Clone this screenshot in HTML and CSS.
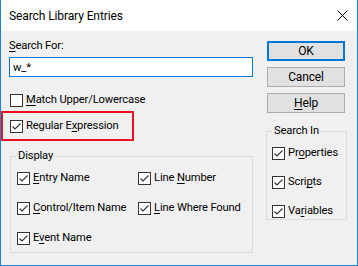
FILE: index.html
```html
<!DOCTYPE html>
<html lang="en">
<head>
    <meta charset="UTF-8">
    <title>Search Library Entries</title>
    <link rel="stylesheet" href="styles.css">
</head>
<body>
    <div class="window">
        <div class="titlebar">
            <span class="title">Search Library Entries</span>
            <svg class="close" width="11" height="11" viewBox="0 0 11 11">
                <path d="M0.5 0.5 L10.5 10.5 M10.5 0.5 L0.5 10.5" stroke="#000" stroke-width="1" fill="none"/>
            </svg>
        </div>
        <div class="content">
            <div class="left">
                <div class="label"><u>S</u>earch For:</div>
                <input type="text" class="search" value="w_*">

                <label class="check first">
                    <span class="box"></span>
                    <span><u>M</u>atch Upper/Lowercase</span>
                </label>

                <div class="highlight">
                    <label class="check">
                        <span class="box checked"></span>
                        <span>Regular E<u>x</u>pression</span>
                    </label>
                </div>

                <fieldset class="group display">
                    <legend>Display</legend>
                    <div class="grid">
                        <label class="check"><span class="box checked"></span><span><u>E</u>ntry Name</span></label>
                        <label class="check"><span class="box checked"></span><span>Line <u>N</u>umber</span></label>
                        <label class="check"><span class="box checked"></span><span><u>C</u>ontrol/Item Name</span></label>
                        <label class="check"><span class="box checked"></span><span><u>L</u>ine Where Found</span></label>
                        <label class="check"><span class="box checked"></span><span>E<u>v</u>ent Name</span></label>
                    </div>
                </fieldset>
            </div>

            <div class="right">
                <button class="btn default">OK</button>
                <button class="btn">Cancel</button>
                <button class="btn"><u>H</u>elp</button>

                <fieldset class="group searchin">
                    <legend>Search In</legend>
                    <div class="stack">
                        <label class="check"><span class="box checked"></span><span>Pr<u>o</u>perties</span></label>
                        <label class="check"><span class="box checked"></span><span>Scri<u>p</u>ts</span></label>
                        <label class="check"><span class="box checked"></span><span>Va<u>r</u>iables</span></label>
                    </div>
                </fieldset>
            </div>
        </div>
    </div>
</body>
</html>
```

FILE: styles.css
```css
body {
    margin: 0;
    font-family: Roboto, "Noto Sans", sans-serif;
    font-size: 11.2px;
    letter-spacing: -0.15px;
    color: #000;
    background-color: #fff;
}
u {
    text-decoration: underline;
    text-underline-offset: 2px;
}
.window {
    width: 356px;
    height: 265px;
    border: 1px solid #1883d7;
    border-top: none;
    background-color: #f0f0f0;
    display: flex;
    flex-direction: column;
}
.titlebar {
    height: 31px;
    background-color: #fff;
    display: flex;
    align-items: center;
    justify-content: space-between;
    padding: 0 9px 0 8px;
}
.title {
    font-size: 12px;
    letter-spacing: -0.1px;
}
.content {
    display: flex;
    padding-left: 8px;
}
.left {
    width: 244px;
    display: flex;
    flex-direction: column;
}
.label {
    margin-top: 7px;
    line-height: 16px;
}
.search {
    margin-top: 3px;
    width: 244px;
    height: 20px;
    box-sizing: border-box;
    border: 1px solid #0078d7;
    padding: 0 0 0 3px;
    font-family: inherit;
    font-size: inherit;
    letter-spacing: inherit;
    outline: none;
}
.check {
    display: flex;
    align-items: center;
    gap: 3px;
    height: 16px;
    line-height: 16px;
    white-space: nowrap;
}
.check.first {
    margin-top: 15px;
    margin-left: 1px;
}
.box {
    width: 13px;
    height: 13px;
    box-sizing: border-box;
    border: 1px solid #333;
    background-color: #fff;
    flex: none;
}
.box.checked {
    background: #fff url("data:image/svg+xml;utf8,<svg xmlns='http://www.w3.org/2000/svg' width='11' height='11'><path d='M1.5 5.5 L4 8 L9.5 2.5' stroke='%23333' stroke-width='1.1' fill='none'/></svg>") no-repeat center;
}
.highlight {
    margin: 3px 0 0 -8px;
    width: 122px;
    height: 26px;
    border: 2px solid #e81123;
    padding-left: 7px;
    display: flex;
    align-items: center;
}
.group {
    margin: 0;
    border: 1px solid #dcdcdc;
    padding: 0;
    min-width: 0;
}
.group legend {
    padding: 0 2px;
    margin-left: 5px;
    line-height: 16px;
}
.display {
    margin-top: 7px;
    margin-left: 1px;
    width: 243px;
    height: 105px;
    box-sizing: border-box;
}
.grid {
    display: grid;
    grid-template-columns: 121px 1fr;
    row-gap: 14px;
    padding: 6px 0 0 6px;
}
.right {
    margin-left: 13px;
    display: flex;
    flex-direction: column;
    padding-top: 10px;
}
.btn {
    width: 78px;
    height: 20px;
    margin-left: 1px;
    margin-bottom: 6px;
    border: 1px solid #adadad;
    background-color: #e1e1e1;
    font-family: inherit;
    font-size: 12px;
    letter-spacing: inherit;
    color: #000;
    padding: 0;
}
.btn.default {
    border: 2px solid #0078d7;
}
.searchin {
    margin-top: 4px;
    width: 81px;
    height: 97px;
    box-sizing: border-box;
}
.stack {
    display: flex;
    flex-direction: column;
    gap: 13px;
    padding: 6px 0 0 5px;
}
```
